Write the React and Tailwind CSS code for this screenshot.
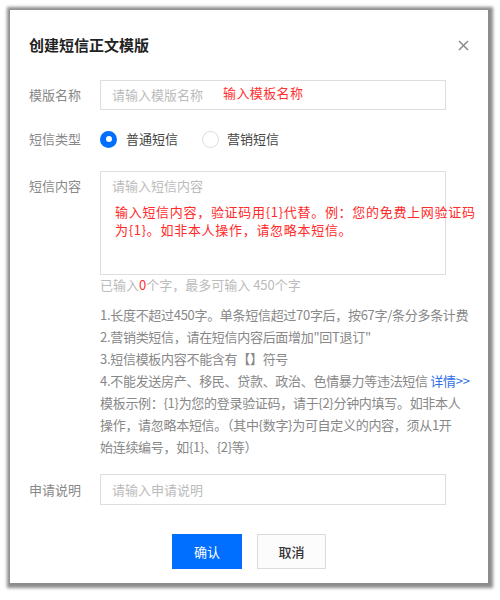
export default function App() {
  return (
    <div className="w-[500px] h-[600px] bg-white pt-[10px] pl-[10px] font-['Noto_Sans_CJK_SC',sans-serif]">
      <div className="relative w-[478px] h-[573px] bg-white shadow-[1px_1px_3px_4px_rgba(0,0,0,0.45)]">
        <div className="flex items-center justify-between h-[47px] pt-[23px] pl-[19px] pr-[19px]">
          <div className="text-[15px] leading-[24px] font-bold text-[#222]">创建短信正文模版</div>
          <svg width="11" height="11" viewBox="0 0 11 11" className="mt-[1px]">
            <path d="M1 1 L10 10 M10 1 L1 10" stroke="#8a8a8a" strokeWidth="1.5" fill="none" />
          </svg>
        </div>

        <div className="pl-[19px]">
          <div className="mt-[23px] flex items-center">
            <div className="w-[71px] text-[13px] leading-[20px] text-[#888]">模版名称</div>
            <div className="relative w-[346px] h-[30px] border border-[#dedede] pl-[11px] flex items-center text-[13px] leading-[20px] text-[#bbb]">
              请输入模版名称
              <span className="absolute left-[122px] top-[2px] text-[13px] leading-[20px] tracking-[0.4px] text-[#ff3030]">输入模板名称</span>
            </div>
          </div>

          <div className="mt-[19px] h-[20px] flex items-center">
            <div className="w-[71px] text-[13px] leading-[20px] text-[#888]">短信类型</div>
            <div className="flex items-center">
              <span className="w-[17px] h-[17px] rounded-full bg-[#006eff] flex items-center justify-center">
                <span className="w-[6px] h-[6px] rounded-full bg-white"></span>
              </span>
              <span className="ml-[9px] text-[13px] leading-[20px] text-[#444]">普通短信</span>
              <span className="ml-[24px] w-[17px] h-[17px] rounded-full border border-[#dcdcdc] bg-white"></span>
              <span className="ml-[8px] text-[13px] leading-[20px] text-[#444]">营销短信</span>
            </div>
          </div>

          <div className="mt-[22px] flex items-start">
            <div className="w-[71px] pt-[5px] text-[13px] leading-[20px] text-[#888]">短信内容</div>
            <div className="relative w-[346px] h-[104px] border border-[#dedede] pl-[11px] pt-[4px] text-[13px] leading-[20px] text-[#bbb]">
              请输入短信内容
              <div className="absolute left-[14px] top-[31px] whitespace-nowrap text-[13px] leading-[18px] tracking-[0.7px] text-[#ff2a2a]">
                <div>输入短信内容，验证码用{"{1}"}代替。例：您的免费上网验证码</div>
                <div>为{"{1}"}。如非本人操作，请忽略本短信。</div>
              </div>
            </div>
          </div>

          <div className="ml-[71px] text-[13px] leading-[20px] text-[#bbb]">
            已输入<span className="text-[#ff3030]">0</span>个字，最多可输入 450个字
          </div>

          <div className="ml-[71px] mt-[9px] text-[13px] leading-[22px] text-[#888] whitespace-nowrap tracking-[-0.3px]">
            <div>1.长度不超过450字。单条短信超过70字后，按67字/条分多条计费</div>
            <div>2.营销类短信，请在短信内容后面增加"回T退订"</div>
            <div>3.短信模板内容不能含有【】符号</div>
            <div>
              4.不能发送房产、移民、贷款、政治、色情暴力等违法短信 <span className="text-[#2f6fe6]">详情&gt;&gt;</span>
            </div>
            <div>模板示例：{"{1}"}为您的登录验证码，请于{"{2}"}分钟内填写。如非本人</div>
            <div>操作，请忽略本短信。（其中{"{数字}"}为可自定义的内容，须从1开</div>
            <div>始连续编号，如{"{1}"}、{"{2}"}等）</div>
          </div>

          <div className="mt-[16px] flex items-center">
            <div className="w-[71px] text-[13px] leading-[20px] text-[#888]">申请说明</div>
            <div className="w-[346px] h-[31px] border border-[#dedede] pl-[11px] flex items-center text-[13px] leading-[20px] text-[#bbb]">
              请输入申请说明
            </div>
          </div>
        </div>

        <div className="mt-[29px] flex justify-center gap-[15px]">
          <div className="w-[70px] h-[35px] bg-[#006eff] flex items-center justify-center text-[13px] text-white">确认</div>
          <div className="w-[69px] h-[35px] border border-[#dcdcdc] bg-[#fcfcfc] flex items-center justify-center text-[13px] text-[#333] font-medium">取消</div>
        </div>
      </div>
    </div>
  );
}
